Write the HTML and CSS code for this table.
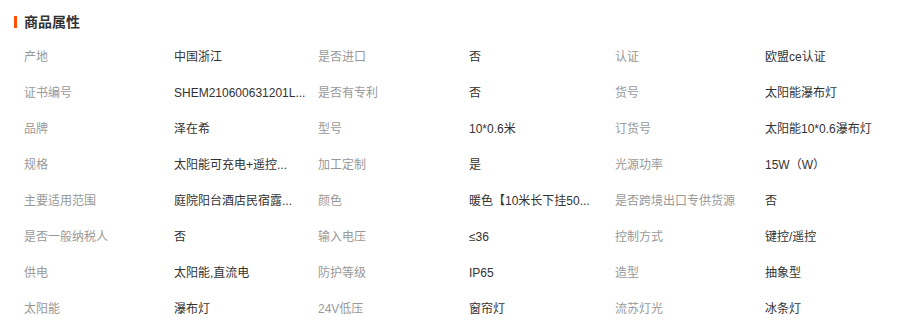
FILE: index.html
```html
<!DOCTYPE html>
<html lang="zh">
<head>
<meta charset="utf-8">
<link rel="stylesheet" href="styles.css">
</head>
<body>
<div class="panel">
  <div class="title"><span class="bar"></span><span class="title-text">商品属性</span></div>
  <div class="grid">
    <div class="k">产地</div><div class="v">中国浙江</div>
    <div class="k">是否进口</div><div class="v">否</div>
    <div class="k">认证</div><div class="v">欧盟ce认证</div>

    <div class="k">证书编号</div><div class="v">SHEM210600631201L...</div>
    <div class="k">是否有专利</div><div class="v">否</div>
    <div class="k">货号</div><div class="v">太阳能瀑布灯</div>

    <div class="k">品牌</div><div class="v">泽在希</div>
    <div class="k">型号</div><div class="v">10*0.6米</div>
    <div class="k">订货号</div><div class="v">太阳能10*0.6瀑布灯</div>

    <div class="k">规格</div><div class="v">太阳能可充电+遥控...</div>
    <div class="k">加工定制</div><div class="v">是</div>
    <div class="k">光源功率</div><div class="v">15W（W）</div>

    <div class="k">主要适用范围</div><div class="v">庭院阳台酒店民宿露...</div>
    <div class="k">颜色</div><div class="v">暖色【10米长下挂50...</div>
    <div class="k">是否跨境出口专供货源</div><div class="v">否</div>

    <div class="k">是否一般纳税人</div><div class="v">否</div>
    <div class="k">输入电压</div><div class="v">≤36</div>
    <div class="k">控制方式</div><div class="v">键控/遥控</div>

    <div class="k">供电</div><div class="v">太阳能,直流电</div>
    <div class="k">防护等级</div><div class="v">IP65</div>
    <div class="k">造型</div><div class="v">抽象型</div>

    <div class="k">太阳能</div><div class="v">瀑布灯</div>
    <div class="k">24V低压</div><div class="v">窗帘灯</div>
    <div class="k">流苏灯光</div><div class="v">冰条灯</div>
  </div>
</div>
</body>
</html>
```
FILE: styles.css
```css
html, body {
  margin: 0;
  padding: 0;
  background: #fff;
}
body {
  font-family: "Liberation Sans", "Noto Sans CJK SC", sans-serif;
  font-size: 12px;
  color: #333;
}
.panel {
  padding: 0 0 0 14px;
}
.title {
  display: flex;
  align-items: center;
  height: 39px;
  padding-top: 4px;
  box-sizing: border-box;
}
.bar {
  width: 3px;
  height: 12px;
  background: #ff5000;
  margin-right: 7px;
}
.title-text {
  font-size: 14px;
  font-weight: bold;
  color: #333;
  line-height: 16px;
}
.grid {
  display: grid;
  grid-template-columns: 150px 144px 151px 146px 150px 1fr;
  grid-auto-rows: 36px;
  padding-left: 10px;
}
.k, .v {
  display: flex;
  align-items: center;
  white-space: nowrap;
  overflow: hidden;
  line-height: 16px;
}
.k {
  color: #999;
}
.v {
  color: #333;
}
```
